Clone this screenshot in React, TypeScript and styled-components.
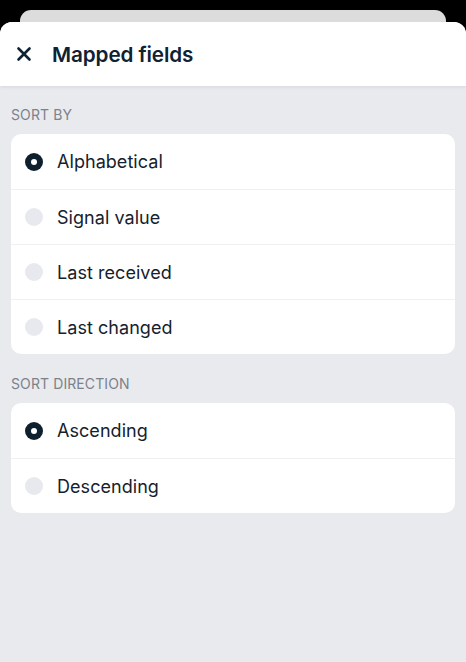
import React, { useState } from "react";
import styled, { createGlobalStyle } from "styled-components";

const Global = createGlobalStyle`
  html, body { margin: 0; padding: 0; background: #000; }
  body { font-family: Inter, "Noto Sans", sans-serif; -webkit-font-smoothing: antialiased; }
  * { box-sizing: border-box; }
`;

const Screen = styled.div`
  width: 466px;
  height: 662px;
  background: #000;
  display: flex;
  flex-direction: column;
  overflow: hidden;
  padding-top: 10px;
`;

const BackCard = styled.div`
  margin: 0 20px;
  height: 22px;
  background: #dcdcdc;
  border-radius: 11px 11px 0 0;
  flex-shrink: 0;
`;

const Sheet = styled.div`
  margin-top: -10px;
  flex: 1;
  background: #e9eaee;
  border-radius: 12px 12px 0 0;
  display: flex;
  flex-direction: column;
  overflow: hidden;
`;

const Header = styled.div`
  height: 64px;
  background: #fff;
  display: flex;
  align-items: center;
  padding-left: 15px;
  gap: 19px;
  box-shadow: 0 1px 4px rgba(0, 0, 0, 0.08);
  position: relative;
  z-index: 1;
`;

const CloseButton = styled.button`
  border: none;
  background: none;
  padding: 0;
  width: 18px;
  height: 18px;
  display: flex;
  align-items: center;
  justify-content: center;
  cursor: pointer;
`;

const Title = styled.h1`
  margin: 0;
  font-size: 20.7px;
  font-weight: 600;
  color: #0f2233;
  letter-spacing: -0.1px;
`;

const Body = styled.div`
  padding: 20px 11px 0;
  display: flex;
  flex-direction: column;
`;

const SectionLabel = styled.div`
  font-size: 14px;
  color: #7c828b;
  text-transform: uppercase;
  letter-spacing: 0.1px;
  line-height: 17px;
  padding-bottom: 11px;
`;

const Card = styled.div`
  background: #fff;
  border-radius: 10px;
  overflow: hidden;
  margin-bottom: 21px;
`;

const Row = styled.label`
  height: 55px;
  display: flex;
  align-items: center;
  padding-left: 14px;
  gap: 14px;
  cursor: pointer;
  & + & {
    border-top: 1px solid #eef0f2;
  }
`;

const Radio = styled.span<{ $checked: boolean }>`
  width: 18px;
  height: 18px;
  border-radius: 50%;
  background: ${(p) => (p.$checked ? "#0e1f2e" : "#e8e9ee")};
  display: flex;
  align-items: center;
  justify-content: center;
  flex-shrink: 0;
  &::after {
    content: "";
    width: 6px;
    height: 6px;
    border-radius: 50%;
    background: #fff;
    display: ${(p) => (p.$checked ? "block" : "none")};
  }
`;

const RowText = styled.span`
  font-size: 18px;
  color: #15212e;
  letter-spacing: 0.05px;
`;

const sortOptions = ["Alphabetical", "Signal value", "Last received", "Last changed"];
const dirOptions = ["Ascending", "Descending"];

export default function App() {
  const [sort, setSort] = useState("Alphabetical");
  const [dir, setDir] = useState("Ascending");
  return (
    <>
      <Global />
      <Screen>
        <BackCard />
        <Sheet>
          <Header>
            <CloseButton aria-label="Close">
              <svg width="16" height="16" viewBox="0 0 16 16">
                <path d="M2.5 2.5 L13.5 13.5 M13.5 2.5 L2.5 13.5" stroke="#0f2233" strokeWidth="2.6" strokeLinecap="round" />
              </svg>
            </CloseButton>
            <Title>Mapped fields</Title>
          </Header>
          <Body>
            <SectionLabel>Sort by</SectionLabel>
            <Card>
              {sortOptions.map((o) => (
                <Row key={o} onClick={() => setSort(o)}>
                  <Radio $checked={sort === o} />
                  <RowText>{o}</RowText>
                </Row>
              ))}
            </Card>
            <SectionLabel>Sort direction</SectionLabel>
            <Card>
              {dirOptions.map((o) => (
                <Row key={o} onClick={() => setDir(o)}>
                  <Radio $checked={dir === o} />
                  <RowText>{o}</RowText>
                </Row>
              ))}
            </Card>
          </Body>
        </Sheet>
      </Screen>
    </>
  );
}
